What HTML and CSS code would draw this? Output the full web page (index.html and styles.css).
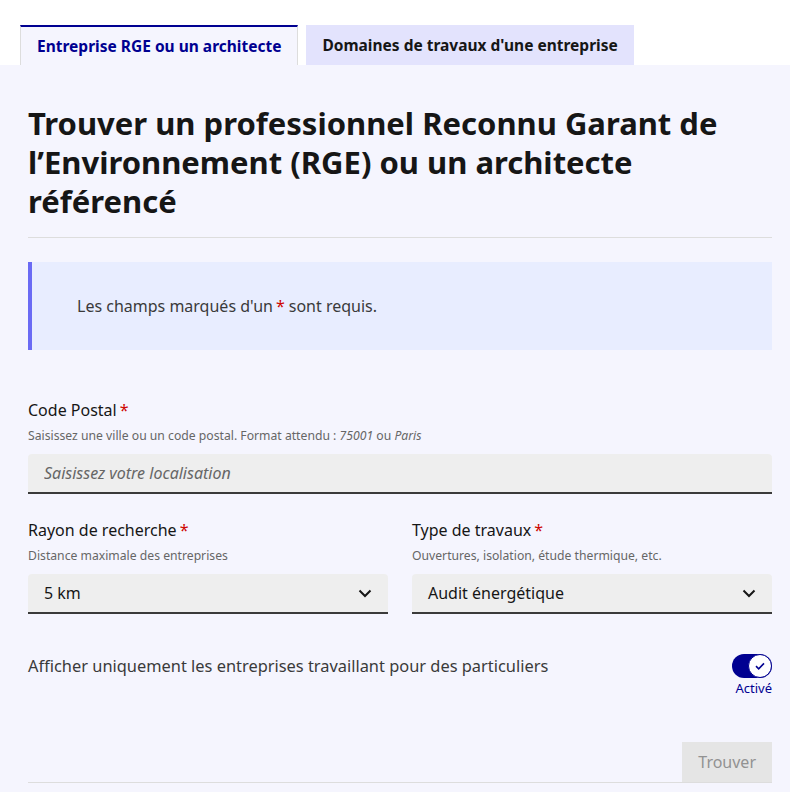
FILE: index.html
```html
<!DOCTYPE html>
<html lang="fr">
<head>
    <meta charset="UTF-8">
    <meta name="viewport" content="width=device-width, initial-scale=1.0">
    <title>Trouver un professionnel RGE</title>
    <link rel="stylesheet" href="styles.css">
</head>
<body>
    <div class="tabs">
        <ul class="tab-list">
            <li><button class="tab tab-active">Entreprise RGE ou un architecte</button></li>
            <li><button class="tab">Domaines de travaux d'une entreprise</button></li>
        </ul>

        <section class="panel">
            <h1 class="title">Trouver un professionnel Reconnu Garant de l’Environnement (RGE) ou un architecte référencé</h1>
            <hr class="sep">

            <div class="notice">
                <p>Les champs marqués d'un<span class="req mark">*</span>sont requis.</p>
            </div>

            <form class="search-form" onsubmit="return false">
                <div class="field">
                    <label for="cp">Code Postal<span class="req">*</span></label>
                    <span class="hint">Saisissez une ville ou un code postal. Format attendu : <em>75001</em> ou <em>Paris</em></span>
                    <input type="text" id="cp" class="input" placeholder="Saisissez votre localisation">
                </div>

                <div class="row">
                    <div class="field">
                        <label for="rayon">Rayon de recherche<span class="req">*</span></label>
                        <span class="hint">Distance maximale des entreprises</span>
                        <div class="select">
                            <span>5 km</span>
                            <svg width="14" height="9" viewBox="0 0 14 9"><path d="M1.5 1.5 7 7l5.5-5.5" fill="none" stroke="#161616" stroke-width="2"/></svg>
                        </div>
                    </div>
                    <div class="field">
                        <label for="type">Type de travaux<span class="req">*</span></label>
                        <span class="hint">Ouvertures, isolation, étude thermique, etc.</span>
                        <div class="select">
                            <span>Audit énergétique</span>
                            <svg width="14" height="9" viewBox="0 0 14 9"><path d="M1.5 1.5 7 7l5.5-5.5" fill="none" stroke="#161616" stroke-width="2"/></svg>
                        </div>
                    </div>
                </div>

                <div class="toggle-row">
                    <span class="toggle-label">Afficher uniquement les entreprises travaillant pour des particuliers</span>
                    <div class="toggle">
                        <span class="switch">
                            <span class="knob">
                                <svg width="12" height="10" viewBox="0 0 12 10"><path d="M2 5.2 4.7 7.8 10 2.4" fill="none" stroke="#000091" stroke-width="1.6"/></svg>
                            </span>
                        </span>
                        <span class="toggle-state">Activé</span>
                    </div>
                </div>

                <div class="actions">
                    <button class="btn" disabled>Trouver</button>
                </div>
            </form>
        </section>
    </div>
</body>
</html>
```

FILE: styles.css
```css
body {
    margin: 0;
    padding: 0;
    background: #fff;
    color: #161616;
    font-family: "Noto Sans", Arial, sans-serif;
    font-size: 16px;
}

.tab-list {
    list-style: none;
    margin: 0;
    padding: 25px 0 0 20px;
    display: flex;
    gap: 8px;
}

.tab {
    font-family: inherit;
    font-size: 15.5px;
    font-weight: 700;
    color: #161616;
    background: #e3e3fd;
    border: none;
    height: 40px;
    padding: 0 16px;
    cursor: pointer;
}

.tab-active {
    background: #f5f5fe;
    color: #000091;
    border-top: 2px solid #000091;
    border-left: 1px solid #ddd;
    border-right: 1px solid #ddd;
}

.panel {
    background: #f5f5fe;
    padding: 39px 18px 10px 28px;
    min-height: 700px;
}

.title {
    margin: 0;
    font-size: 31px;
    line-height: 39px;
    font-weight: 700;
}

.sep {
    border: none;
    border-top: 1px solid #ddd;
    margin: 16px 0 24px;
}

.notice {
    background: #e8edff;
    border-left: 4px solid #6a6af4;
    height: 88px;
    display: flex;
    align-items: center;
    padding-left: 45px;
    color: #3a3a3a;
}

.notice p {
    margin: 0;
}

.req {
    color: #ce0500;
    margin-left: 3px;
}

.mark {
    margin-right: 4px;
}

.search-form {
    padding-top: 48px;
}

.field {
    display: flex;
    flex-direction: column;
}

.field label {
    line-height: 24px;
}

.hint {
    font-size: 12.2px;
    line-height: 20px;
    color: #666;
    margin-top: 4px;
    margin-bottom: 8px;
}

.input {
    font-family: inherit;
    font-size: 16px;
    height: 40px;
    box-sizing: border-box;
    border: none;
    border-bottom: 2px solid #3a3a3a;
    border-radius: 4px 4px 0 0;
    background: #eee;
    padding: 0 16px;
}

.input::placeholder {
    color: #666;
    font-style: italic;
}

.row {
    display: grid;
    grid-template-columns: 1fr 1fr;
    gap: 24px;
    margin-top: 24px;
}

.select {
    height: 40px;
    box-sizing: border-box;
    background: #eee;
    border-bottom: 2px solid #3a3a3a;
    border-radius: 4px 4px 0 0;
    display: flex;
    align-items: center;
    justify-content: space-between;
    padding: 0 16px;
}

.toggle-row {
    display: flex;
    justify-content: space-between;
    margin-top: 40px;
    color: #3a3a3a;
}

.toggle-label {
    line-height: 24px;
    font-size: 16.4px;
}

.toggle {
    display: flex;
    flex-direction: column;
    align-items: flex-end;
}

.switch {
    width: 40px;
    height: 24px;
    border-radius: 12px;
    background: #000091;
    position: relative;
}

.knob {
    position: absolute;
    right: 0;
    top: 0;
    width: 22px;
    height: 22px;
    border: 1px solid #000091;
    border-radius: 50%;
    background: #fff;
    display: flex;
    align-items: center;
    justify-content: center;
}

.toggle-state {
    font-size: 13px;
    line-height: 20px;
    color: #000091;
}

.actions {
    display: flex;
    justify-content: flex-end;
    margin-top: 44px;
    border-bottom: 1px solid #ddd;
}

.btn {
    font-family: inherit;
    font-size: 16px;
    height: 40px;
    padding: 0 16px;
    border: none;
    background: #e5e5e5;
    color: #929292;
}
```
